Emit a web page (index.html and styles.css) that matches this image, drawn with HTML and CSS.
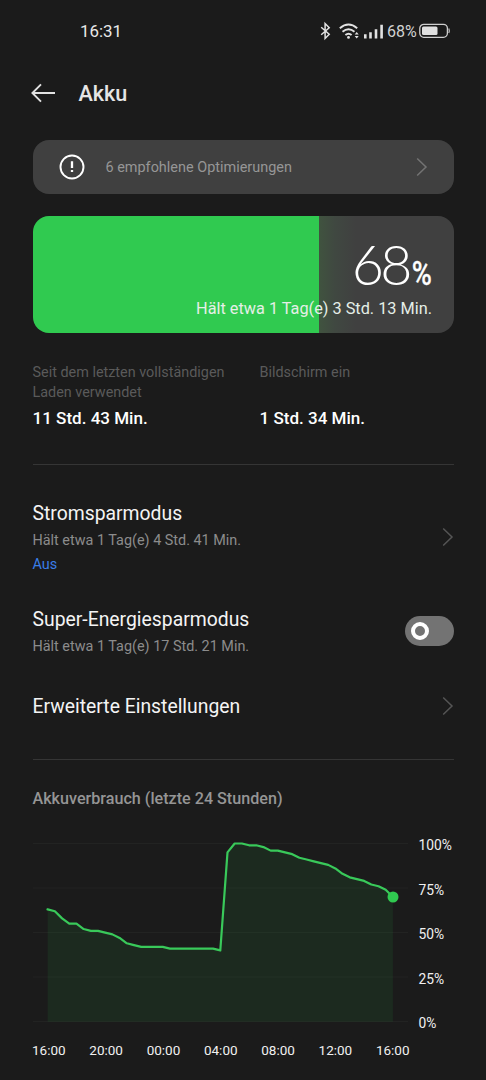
FILE: index.html
```html
<!DOCTYPE html>
<html lang="de">
<head>
<meta charset="utf-8">
<title>Akku</title>
<link rel="stylesheet" href="styles.css">
</head>
<body>
<div class="screen">
  <div class="status">
    <span class="clock">16:31</span>
    <svg class="status-icons" width="66" height="20" viewBox="0 0 66 20" fill="none" stroke="#e2e2e2">
      <path d="M2.200 6.200l8 7-4.100 4.200V2.600l4.100 4.200-8 7" stroke-width="1.500"/>
      <path d="M20.800 7.300q8.700-7.400 17.400 0M23.500 10.800q6-5 12 0M26.400 14q3.100-2.600 6.200 0" stroke-width="1.900"/>
      <circle cx="29.500" cy="16.400" r="1.400" fill="#e2e2e2" stroke="none"/>
      <path d="M35.700 13.500l2-2.400 2 2.400zM35.700 15l2 2.400 2-2.400z" fill="#e2e2e2" stroke="none"/>
      <path d="M46.300 17.400v-4.200M51.500 17.400v-6.200M57 17.400v-9.200M62.600 17.400V3.800" stroke-width="2.600" stroke-linecap="butt"/>
    </svg>
    <span class="status-pct">68%</span>
    <svg class="battery-icon" width="32" height="16" viewBox="0 0 32 16">
      <rect x=".8" y="1.300" width="27.600" height="13" rx="4" fill="none" stroke="#cfcfcf" stroke-width="1.300"/>
      <rect x="3" y="3.500" width="15.500" height="8.600" rx="1.500" fill="#e0e0e0"/>
      <path d="M29.800 5.500q1 2.300 0 4.600" fill="none" stroke="#bdbdbd" stroke-width="1.200"/>
    </svg>
  </div>

  <header class="header">
    <svg width="24" height="20" viewBox="0 0 24 20" fill="none" stroke="#e2e2e2" stroke-width="1.900"><path d="M24 10H1.500M10 1.400L1.400 10l8.600 8.600"/></svg>
    <h1 class="title">Akku</h1>
  </header>

  <section class="tip">
    <svg width="26" height="26" viewBox="0 0 26 26" fill="none" stroke="#fff"><circle cx="13" cy="13" r="11.500" stroke-width="1.900"/><path d="M13 7.300v6.800M13 15.900v2.200" stroke-width="2.300"/></svg>
    <span class="tip-text">6 empfohlene Optimierungen</span>
    <svg class="chevron" width="12" height="20" viewBox="0 0 12 20"><path d="M1.200 1.500L10 10l-8.800 8.500"/></svg>
  </section>

  <section class="battery">
    <div class="level">68<span class="unit">%</span></div>
    <div class="remaining">Hält etwa 1 Tag(e) 3 Std. 13 Min.</div>
  </section>

  <section class="stats">
    <div class="stat">
      <div class="stat-label">Seit dem letzten vollständigen<br>Laden verwendet</div>
      <div class="stat-value">11 Std. 43 Min.</div>
    </div>
    <div class="stat">
      <div class="stat-label">Bildschirm ein</div>
      <div class="stat-value">1 Std. 34 Min.</div>
    </div>
  </section>

  <section class="list">
    <div class="item item-saver">
      <div><div class="item-title">Stromsparmodus</div><div class="item-sub">Hält etwa 1 Tag(e) 4 Std. 41 Min.</div><div class="item-state">Aus</div></div>
      <svg class="chevron" width="12" height="20" viewBox="0 0 12 20"><path d="M1.200 1.500L10 10l-8.800 8.500"/></svg>
    </div>
    <div class="item item-super">
      <div><div class="item-title">Super-Energiesparmodus</div><div class="item-sub">Hält etwa 1 Tag(e) 17 Std. 21 Min.</div></div>
      <span class="toggle"><span class="knob"></span></span>
    </div>
    <div class="item item-advanced">
      <div class="item-title">Erweiterte Einstellungen</div>
      <svg class="chevron" width="12" height="20" viewBox="0 0 12 20"><path d="M1.200 1.500L10 10l-8.800 8.500"/></svg>
    </div>
  </section>

  <section class="usage">
    <h2 class="usage-title">Akkuverbrauch (letzte 24 Stunden)</h2>
    <div class="chart-row">
      <svg class="chart" width="375" height="190" viewBox="0 0 375 190">
        <path d="M0 5.500H375M0 50H375M0 94.500H375M0 139H375M0 183.500H375" stroke="#222322" stroke-width="1"/>
        <svg x="14.700" y="5.500" width="345.200" height="178.200" viewBox="0 0 48 100" preserveAspectRatio="none" overflow="visible">
          <polygon class="area" points="0,37 1,38 2,42 3,45 4,45 5,48 6,49 7,49 8,50 9,51 10,53 11,56 12,57 13,58 16,58 17,59 23,59 24,60 25,5 26,0 27,0 28,1 29,1 30,2 31,4 32,4 33,5 34,6 35,8 36,9 37,10 38,11 39,12 40,14 41,17 42,19 43,20 44,21 45,23 46,24 47,26 48,30 48,100 0,100"/>
          <polyline class="line" points="-0.150,36.800 0,37 1,38 2,42 3,45 4,45 5,48 6,49 7,49 8,50 9,51 10,53 11,56 12,57 13,58 16,58 17,59 23,59 24,60 25,5 26,0 27,0 28,1 29,1 30,2 31,4 32,4 33,5 34,6 35,8 36,9 37,10 38,11 39,12 40,14 41,17 42,19 43,20 44,21 45,23 46,24 47,26 48,30"/>
        </svg>
        <circle cx="360" cy="59" r="5.500" fill="#30ca50"/>
      </svg>
      <div class="y-axis"><span>100%</span><span>75%</span><span>50%</span><span>25%</span><span>0%</span></div>
    </div>
    <div class="x-axis"><span>16:00</span><span>20:00</span><span>00:00</span><span>04:00</span><span>08:00</span><span>12:00</span><span>16:00</span></div>
  </section>
</div>
</body>
</html>
```
FILE: styles.css
```css
* { box-sizing: border-box; }
body { margin: 0; background: #1b1b1b; font-family: Roboto, sans-serif; color: #f0f0f0; }
.screen { width: 486px; height: 1080px; overflow: hidden; padding: 0 32.500px; display: flex; flex-direction: column; }
svg { display: block; flex: none; }
div, span { white-space: nowrap; }

.status { height: 62px; margin: 0 -28px 0 0; padding-left: 47.500px; display: flex; align-items: center; flex: none; }
.clock { font-size: 16.900px; width: 239px; color: #e8e8e8; }
.status-pct { font-size: 16px; margin-left: 2px; width: 31.500px; color: #d2d2d2; }

.header { height: 62px; margin-left: -2px; display: flex; align-items: center; gap: 24px; flex: none; }
.title { margin: 0; font-size: 21.600px; font-weight: 500; color: #e5e5e5; }

.tip { margin-top: 16px; height: 54px; border-radius: 16px; background: #404040; display: flex; align-items: center; padding: 0 26px; flex: none; }
.tip-text { font-size: 14.450px; color: #969696; margin-left: 21px; flex: 1; }
.chevron path { fill: none; stroke: #737373; stroke-width: 1.500; }

.battery { margin-top: 21.500px; height: 117.500px; border-radius: 16px; padding: 18px 21.500px 0 0; text-align: right; flex: none;
  background: linear-gradient(90deg, #30ca50 0 286.500px, #40533f 286.500px, #404841 302px, #404040 323px); }
.level { font-family: Lato, sans-serif; font-size: 55.500px; line-height: 59px; height: 63px; font-weight: 300; color: #fff; letter-spacing: -3.500px; }
.unit { display: inline-block; font-family: Roboto, sans-serif; font-size: 32.500px; line-height: 40px; font-weight: 500; letter-spacing: 0; transform: scaleX(.84); transform-origin: right; margin-left: -1px; -webkit-text-stroke: .3px #fff; }
.remaining { font-size: 16.300px; line-height: 24px; color: #e5efe7; }

.stats { margin-top: 29px; height: 103px; border-bottom: 1px solid #353535; display: grid; grid-template-columns: 227px 1fr; flex: none; }
.stat-label { position: relative; top: 1px; font-size: 14.400px; line-height: 20px; height: 44px; color: #5a5a5a; }
.stat-value { font-size: 17.050px; line-height: 24px; font-weight: 500; color: #fff; }

.list { height: 295px; border-bottom: 1px solid #353535; flex: none; }
.item { display: flex; align-items: center; justify-content: space-between; }
.item-saver { margin-top: 35px; height: 76px; }
.item-super { margin-top: 29px; height: 54px; }
.item-advanced { margin-top: 33px; height: 30px; }
.item-title { font-size: 19.350px; line-height: 28px; color: #f4f4f4; }
.item-sub { font-size: 14.400px; line-height: 25px; color: #8c8c8c; }
.item-state { font-size: 14.400px; line-height: 23px; color: #397ee8; }
.item .chevron path { stroke: #555; }
.item-saver .chevron { margin-top: -3px; }
.item-advanced .chevron { margin-top: -2px; }
.toggle { width: 49px; height: 30px; margin-top: -2px; border-radius: 15px; background: #737373; display: flex; align-items: center; padding-left: 6px; }
.knob { width: 18px; height: 18px; border: 4px solid #fff; border-radius: 50%; }

.usage-title { margin: 26px 0 0; font-size: 16.150px; line-height: 25px; font-weight: 500; color: #959595; }
.chart-row { display: flex; margin-top: 27px; height: 190px; }
.area { fill: #30ca50; fill-opacity: .09; }
.line { fill: none; stroke: #39c95a; stroke-width: 2.200; vector-effect: non-scaling-stroke; stroke-linejoin: round; }
.y-axis { margin: -3px 0 0 11px; font-size: 13.800px; line-height: 20px; height: 198px; display: flex; flex-direction: column; justify-content: space-between; }
.x-axis { width: 377.500px; margin: 12px 0 0 -.500px; display: flex; justify-content: space-between; font-size: 13.500px; line-height: 20px; }
```
